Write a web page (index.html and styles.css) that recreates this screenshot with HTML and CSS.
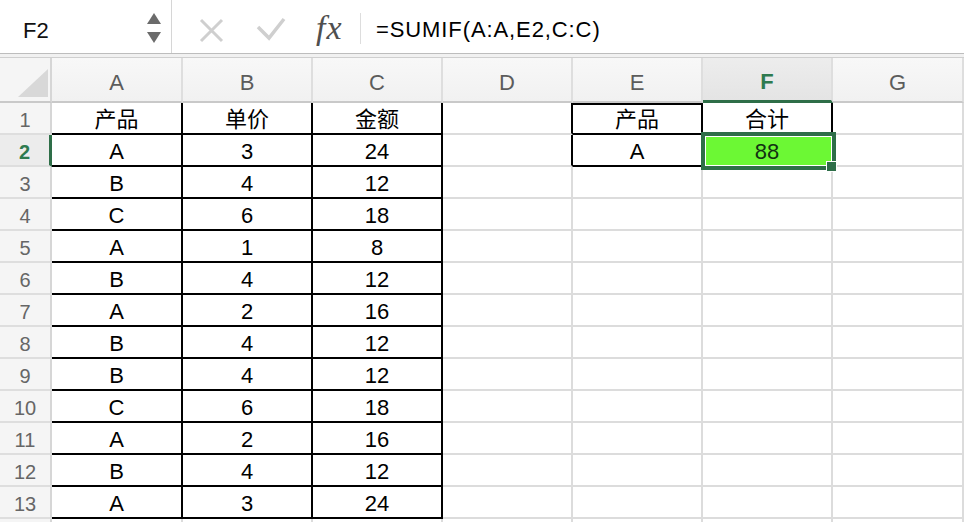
FILE: index.html
```html
<!DOCTYPE html>
<html lang="zh">
<head>
<meta charset="utf-8">
<title>Sheet</title>
<link rel="stylesheet" href="styles.css">
</head>
<body>
<div class="fbar">
  <div class="namebox">
    <span class="ref">F2</span>
    <svg class="spin" width="14" height="53" viewBox="0 0 14 53"><polygon points="7,13 14,24 0,24" fill="#6b6b6b"/><polygon points="0,32 14,32 7,43" fill="#6b6b6b"/></svg>
  </div>
  <svg class="acts" width="127" height="53" viewBox="0 0 127 53">
    <path d="M29 20 L50 41 M50 20 L29 41" stroke="#cfcfcf" stroke-width="3" fill="none"/>
    <path d="M86 27 L97 38 L112 19" stroke="#cfcfcf" stroke-width="3.5" fill="none" stroke-linejoin="miter"/>
  </svg>
  <span class="fx">fx</span>
  <span class="sep"></span>
  <span class="formula">=SUMIF(A:A,E2,C:C)</span>
</div>
<div class="strip"></div>
<div class="sheet">
  <div class="grid">
    <div class="corner"><svg width="52" height="45" viewBox="0 0 52 45"><polygon points="18,39 48,39 48,11" fill="#d8d8d8"/></svg></div>
    <div class="h">A</div><div class="h">B</div><div class="h">C</div><div class="h">D</div><div class="h">E</div><div class="h hs">F</div><div class="h">G</div>

    <div class="r">1</div><div class="c k">产品</div><div class="c k">单价</div><div class="c k">金额</div><div class="c kr"></div><div class="c k kt">产品</div><div class="c k">合计</div><div class="c"></div>
    <div class="r rs">2</div><div class="c k">A</div><div class="c k">3</div><div class="c k">24</div><div class="c kr"></div><div class="c k">A</div><div class="c k lime">88</div><div class="c"></div>
    <div class="r">3</div><div class="c k">B</div><div class="c k">4</div><div class="c k">12</div><div class="c"></div><div class="c"></div><div class="c"></div><div class="c"></div>
    <div class="r">4</div><div class="c k">C</div><div class="c k">6</div><div class="c k">18</div><div class="c"></div><div class="c"></div><div class="c"></div><div class="c"></div>
    <div class="r">5</div><div class="c k">A</div><div class="c k">1</div><div class="c k">8</div><div class="c"></div><div class="c"></div><div class="c"></div><div class="c"></div>
    <div class="r">6</div><div class="c k">B</div><div class="c k">4</div><div class="c k">12</div><div class="c"></div><div class="c"></div><div class="c"></div><div class="c"></div>
    <div class="r">7</div><div class="c k">A</div><div class="c k">2</div><div class="c k">16</div><div class="c"></div><div class="c"></div><div class="c"></div><div class="c"></div>
    <div class="r">8</div><div class="c k">B</div><div class="c k">4</div><div class="c k">12</div><div class="c"></div><div class="c"></div><div class="c"></div><div class="c"></div>
    <div class="r">9</div><div class="c k">B</div><div class="c k">4</div><div class="c k">12</div><div class="c"></div><div class="c"></div><div class="c"></div><div class="c"></div>
    <div class="r">10</div><div class="c k">C</div><div class="c k">6</div><div class="c k">18</div><div class="c"></div><div class="c"></div><div class="c"></div><div class="c"></div>
    <div class="r">11</div><div class="c k">A</div><div class="c k">2</div><div class="c k">16</div><div class="c"></div><div class="c"></div><div class="c"></div><div class="c"></div>
    <div class="r">12</div><div class="c k">B</div><div class="c k">4</div><div class="c k">12</div><div class="c"></div><div class="c"></div><div class="c"></div><div class="c"></div>
    <div class="r">13</div><div class="c k">A</div><div class="c k">3</div><div class="c k">24</div><div class="c"></div><div class="c"></div><div class="c"></div><div class="c"></div>
    <div class="r e"></div><div class="c e"></div><div class="c e"></div><div class="c e"></div><div class="c e"></div><div class="c e"></div><div class="c e"></div><div class="c e"></div>
  </div>
  <div class="sel"></div>
  <div class="handle"></div>
</div>
</body>
</html>
```

FILE: styles.css
```css
html, body {
  margin: 0;
  padding: 0;
  background: #ffffff;
}
body {
  width: 964px;
  height: 522px;
  overflow: hidden;
  font-family: "Liberation Sans", "Noto Sans CJK SC", sans-serif;
}

/* formula bar */
.fbar {
  display: flex;
  align-items: center;
  height: 53px;
  border-bottom: 1px solid #bdbdbd;
  background: #ffffff;
}
.namebox {
  display: flex;
  align-items: center;
  width: 172px;
  height: 53px;
  box-sizing: border-box;
  padding-left: 23px;
  padding-right: 10px;
  border-right: 1px solid #d6d6d6;
  flex: none;
}
.ref {
  font-size: 22px;
  color: #111;
  margin-top: 8px;
}
.spin {
  margin-left: auto;
  display: block;
}
.acts {
  display: block;
  flex: none;
}
.fx {
  margin-left: 17px;
  width: 31px;
  font-family: "Liberation Serif", serif;
  font-style: italic;
  font-size: 34px;
  letter-spacing: 1px;
  color: #4f4f4f;
  line-height: 53px;
  margin-top: 2px;
  flex: none;
}
.sep {
  margin-left: 13px;
  width: 1px;
  height: 31px;
  margin-top: 4px;
  background: #dddddd;
  flex: none;
}
.formula {
  margin-left: 15px;
  margin-top: 7px;
  font-size: 22px;
  letter-spacing: 0.9px;
  color: #000;
}
.strip {
  height: 3px;
  background: #f1f1f1;
  border-bottom: 1px solid #cfcfcf;
}

/* sheet */
.sheet {
  position: relative;
}
.grid {
  display: grid;
  grid-template-columns: 52px 131px 130px 130px 130px 130px 130px 131px;
  grid-template-rows: 45px repeat(13, 32px) 3px;
}
.grid > div {
  box-sizing: border-box;
}
.grid > .e {
  border-bottom: 0;
}
.corner {
  background: #f5f5f5;
  border-right: 2px solid #d6d6d6;
  border-bottom: 2px solid #c9c9c9;
}
.corner svg {
  display: block;
}
.h {
  display: flex;
  align-items: center;
  justify-content: center;
  background: linear-gradient(#f8f8f8, #f1f1f1);
  border-right: 2px solid #dedede;
  border-bottom: 2px solid #c9c9c9;
  font-size: 22px;
  color: #5c5c5c;
  padding-top: 6px;
}
.h.hs {
  background: linear-gradient(#ededed, #e4e4e4);
  border-bottom: 3px solid #2e6e48;
  color: #2e7a4f;
  font-weight: bold;
}
.r {
  display: flex;
  align-items: center;
  justify-content: center;
  background: #f5f5f5;
  border-right: 2px solid #d6d6d6;
  border-bottom: 2px solid #dedede;
  font-size: 20px;
  color: #666;
  padding-top: 4px;
}
.r.rs {
  border-right: 3px solid #2e6e48;
  background: #ececec;
  color: #2e7a4f;
  font-weight: bold;
}
.c {
  display: flex;
  align-items: flex-end;
  justify-content: center;
  border-right: 2px solid #dcdcdc;
  border-bottom: 2px solid #dcdcdc;
  font-size: 22px;
  line-height: 26px;
  color: #000;
}
.c.k {
  border-right-color: #000;
  border-bottom-color: #000;
}
.c.kr {
  border-right-color: #000;
}
.c.kt {
  box-shadow: inset 0 2px 0 #000;
}
.c.lime {
  background: #6cf834;
  color: #123212;
}

/* selection overlay */
.sel {
  position: absolute;
  left: 701px;
  top: 74px;
  width: 135px;
  height: 38px;
  box-sizing: border-box;
  border: 4px solid #2e6e48;
  box-shadow: inset 0 0 0 1px #ffffff;
}
.handle {
  position: absolute;
  left: 826px;
  top: 103px;
  width: 11px;
  height: 11px;
  box-sizing: border-box;
  background: #2e6e48;
  border: 1px solid #ffffff;
}
```
